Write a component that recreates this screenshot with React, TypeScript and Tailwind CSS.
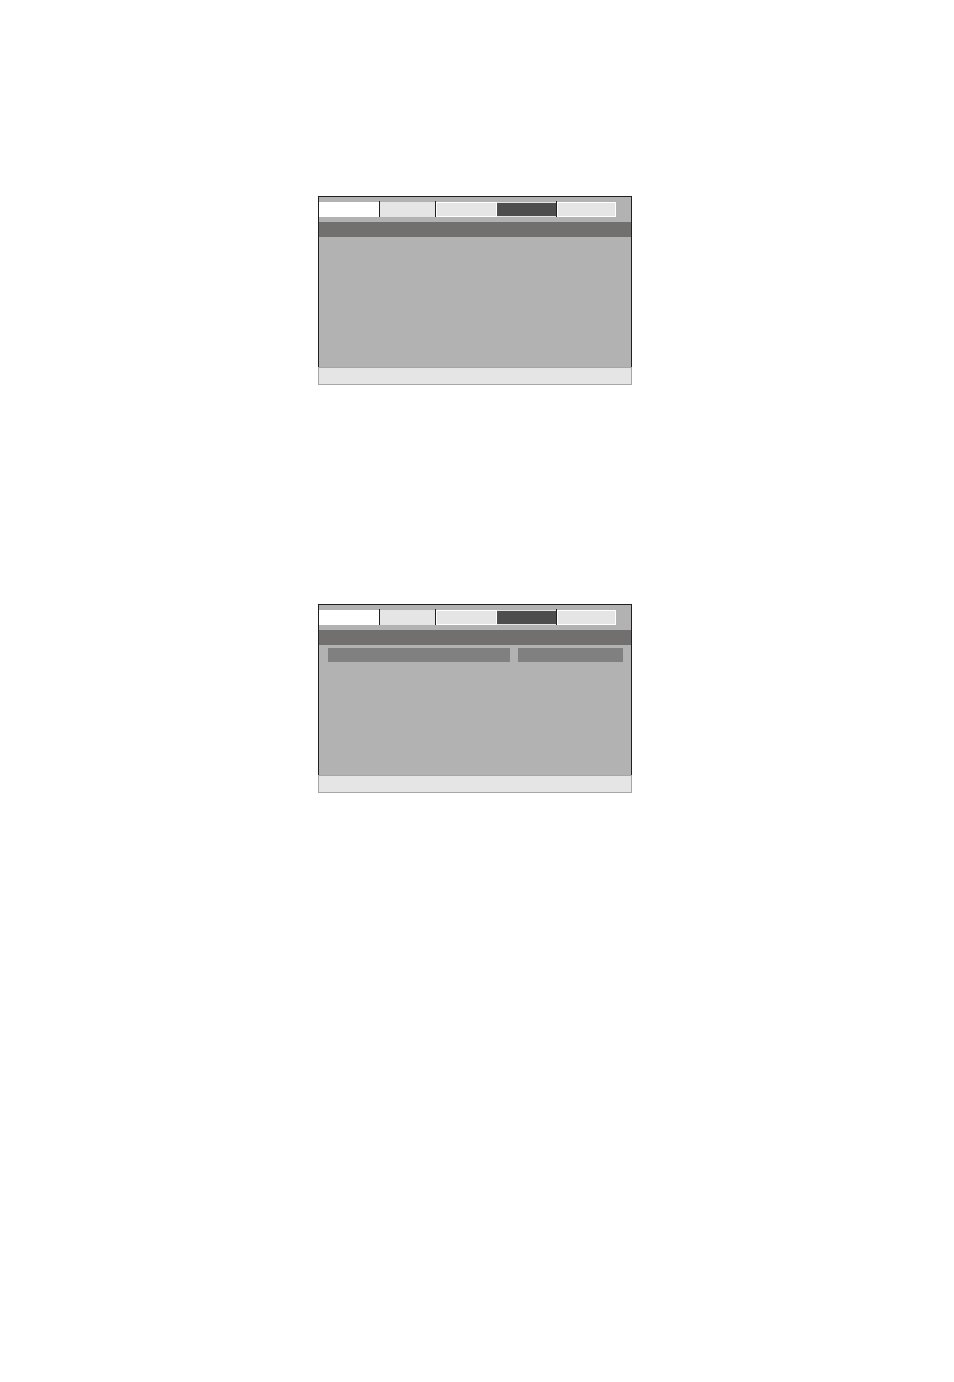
import React from "react";

function Tabs() {
  return (
    <div className="flex items-end mt-[4px] h-[16px]">
      <div className="w-[60px] h-[15px] bg-white" />
      <div className="w-px h-[16px] bg-[#231f20]" />
      <div className="w-[55px] h-[15px] bg-[#e5e5e5]" />
      <div className="w-px h-[16px] bg-[#231f20]" />
      <div className="w-[61px] h-[15px] bg-[#e5e5e5] border border-white" />
      <div className="w-[59px] h-[15px] bg-[#4d4d4d] border-t border-b border-[#e5e5e5]" />
      <div className="w-px h-[16px] bg-[#231f20]" />
      <div className="w-[59px] h-[15px] bg-[#e5e5e5] border border-white" />
    </div>
  );
}

function Screen({ bars }: { bars?: boolean }) {
  return (
    <div className="w-[314px]">
      <div className="border-l border-t border-r border-[#231f20] bg-[#b2b2b2] h-[171px] flex flex-col">
        <Tabs />
        <div className="mt-[5px] h-[15px] bg-[#71706e]" />
        {bars && (
          <div className="flex mt-[3px] ml-[9px] gap-[8px]">
            <div className="w-[182px] h-[14px] bg-[#808080]" />
            <div className="w-[105px] h-[14px] bg-[#808080]" />
          </div>
        )}
      </div>
      <div className="h-[18px] bg-[#e5e5e5] border border-[#a6a6a6]" />
    </div>
  );
}

export default function App() {
  return (
    <div className="w-[954px] h-[1382px] bg-white pt-[196px] pl-[318px]">
      <Screen />
      <div className="h-[219px]" />
      <Screen bars />
    </div>
  );
}
